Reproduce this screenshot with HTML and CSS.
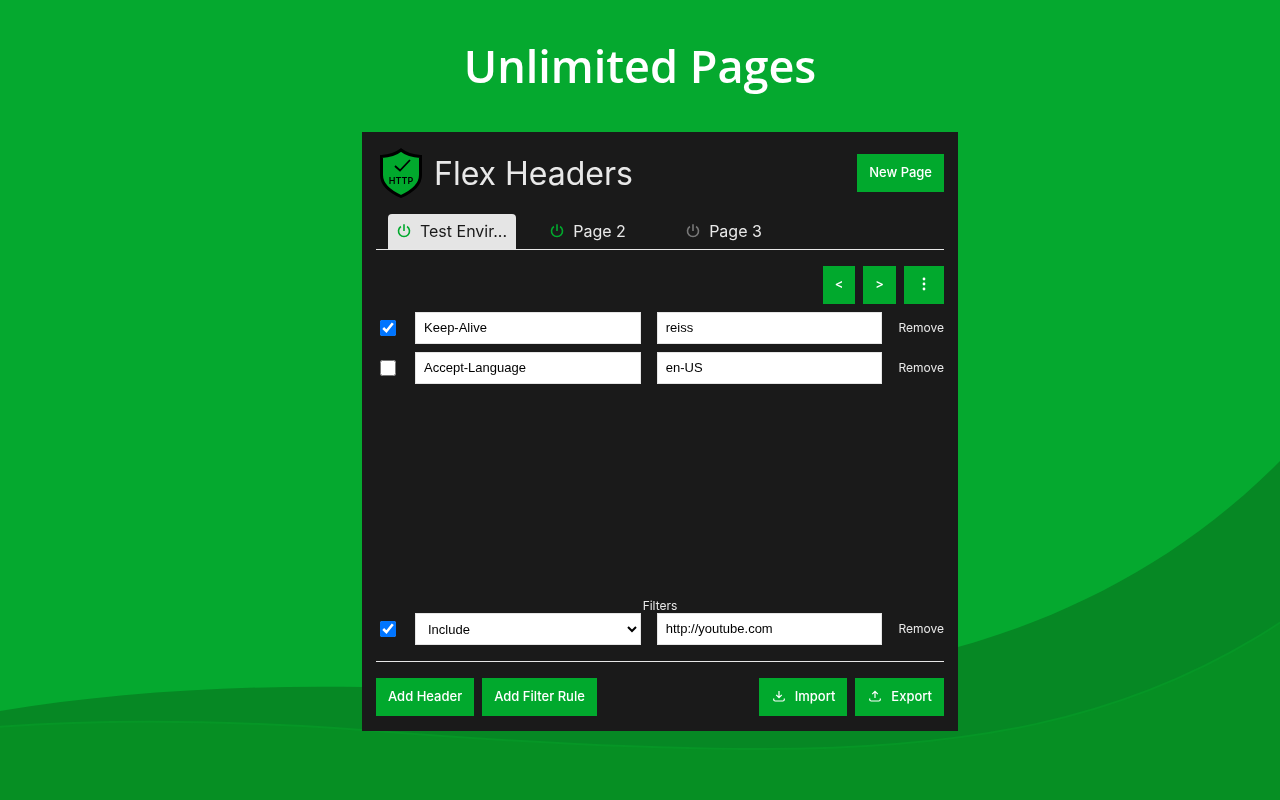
FILE: index.html
```html
<!DOCTYPE html>
<html lang="en">
<head>
<meta charset="utf-8">
<title>Flex Headers</title>
<link rel="stylesheet" href="styles.css">
</head>
<body>
<svg class="waves" viewBox="0 0 1280 800" preserveAspectRatio="none" aria-hidden="true">
  <path class="wave-back" d="M0 711C110 693 230 685 362 687C560 690 780 690 958 647C1080 613 1190 552 1280 461V800H0Z"/>
  <path class="wave-front" d="M-4 727C120 718 240 721 362 730C500 741 620 748 740 749C960 751 1130 723 1284 620V804H-4Z"/>
</svg>
<main class="showcase">
  <h1 class="headline">Unlimited Pages</h1>
  <section class="panel">
    <header class="panel-header">
      <svg class="logo" viewBox="0 0 42 50" aria-hidden="true">
        <path d="M21 2C16 6 9 8 1.500 8.500V27C1.500 37 11 44 21 48.500C31 44 40.500 37 40.500 27V8.500C33 8 26 6 21 2Z" fill="#01a92d" stroke="#000" stroke-width="3"/>
        <path d="M15 18l5 4.500L30 12" fill="none" stroke="#000" stroke-width="1.800"/>
        <text x="21" y="35.500" text-anchor="middle" class="logo-text">HTTP</text>
      </svg>
      <h2 class="app-name">Flex Headers</h2>
      <button class="btn" type="button">New Page</button>
    </header>
    <nav class="tabs">
      <button class="tab tab-active" type="button">
        <svg class="power" viewBox="0 0 14 14" aria-hidden="true"><path d="M3.900 2.500A5.500 5.500 0 1 0 10.100 2.500M7 .3V7"/></svg>
        <span class="tab-label">Test Envir...</span>
      </button>
      <button class="tab" type="button">
        <svg class="power" viewBox="0 0 14 14" aria-hidden="true"><path d="M3.900 2.500A5.500 5.500 0 1 0 10.100 2.500M7 .3V7"/></svg>
        <span class="tab-label">Page 2</span>
      </button>
      <button class="tab" type="button">
        <svg class="power power-off" viewBox="0 0 14 14" aria-hidden="true"><path d="M3.900 2.500A5.500 5.500 0 1 0 10.100 2.500M7 .3V7"/></svg>
        <span class="tab-label">Page 3</span>
      </button>
    </nav>
    <div class="actions">
      <button class="btn" type="button" aria-label="Move page left">&lt;</button>
      <button class="btn" type="button" aria-label="Move page right">&gt;</button>
      <button class="btn" type="button" aria-label="More options">
        <svg class="icon" viewBox="0 0 16 16" aria-hidden="true"><g fill="currentColor"><circle cx="8" cy="3" r="1.400"/><circle cx="8" cy="8" r="1.400"/><circle cx="8" cy="13" r="1.400"/></g></svg>
      </button>
    </div>
    <div class="rules">
      <div class="rule">
        <input class="check" type="checkbox" aria-label="Enable Keep-Alive" checked>
        <input class="field" type="text" aria-label="Header name" value="Keep-Alive">
        <input class="field" type="text" aria-label="Header value" value="reiss">
        <button class="remove" type="button">Remove</button>
      </div>
      <div class="rule">
        <input class="check" type="checkbox" aria-label="Enable Accept-Language">
        <input class="field" type="text" aria-label="Header name" value="Accept-Language">
        <input class="field" type="text" aria-label="Header value" value="en-US">
        <button class="remove" type="button">Remove</button>
      </div>
    </div>
    <div class="filters">
      <h3 class="filters-title">Filters</h3>
      <div class="rule">
        <input class="check" type="checkbox" aria-label="Enable filter" checked>
        <select class="field field-select" aria-label="Filter type"><option>Include</option><option>Exclude</option></select>
        <input class="field" type="text" aria-label="Filter URL" value="http://youtube.com">
        <button class="remove" type="button">Remove</button>
      </div>
    </div>
    <footer class="panel-footer">
      <button class="btn" type="button">Add Header</button>
      <button class="btn" type="button">Add Filter Rule</button>
      <button class="btn btn-push" type="button">
        <svg class="icon icon-line" viewBox="0 0 16 16" aria-hidden="true"><path d="M8 3v6.500M5.200 6.900L8 9.700l2.800-2.800M2.700 10.500v1q0 1.500 1.500 1.500h7.600q1.500 0 1.500-1.500v-1"/></svg>
        Import
      </button>
      <button class="btn" type="button">
        <svg class="icon icon-line" viewBox="0 0 16 16" aria-hidden="true"><path d="M8 10V3.300M5.200 6.100L8 3.300l2.800 2.800M2.700 10.500v1q0 1.500 1.500 1.500h7.600q1.500 0 1.500-1.500v-1"/></svg>
        Export
      </button>
    </footer>
  </section>
</main>
</body>
</html>
```
FILE: styles.css
```css
* {
  box-sizing: border-box;
}

body {
  margin: 0;
  min-height: 100vh;
  background: #05a92f;
  font-family: Inter, "Liberation Sans", sans-serif;
}

button {
  border: 0;
  background: none;
  font-family: inherit;
  cursor: pointer;
}

.waves {
  position: fixed;
  inset: 0;
  width: 100%;
  height: 100%;
  z-index: -1;
}

.wave-back {
  fill: #068824;
}

.wave-front {
  fill: #068f23;
  stroke: #069626;
  stroke-width: 2;
}

.showcase {
  display: flex;
  flex-direction: column;
  align-items: center;
  padding: 34px 0 40px;
}

.headline {
  margin: 0 0 34px;
  color: #fff;
  font: 600 45px/64px "Open Sans", "Noto Sans", sans-serif;
}

.panel {
  display: flex;
  flex-direction: column;
  width: 100%;
  max-width: 596px;
  margin-left: 40px;
  padding: 14px 14px 15px;
  background: #1a1a1a;
  color: #e8e8e8;
}

.panel-header {
  display: flex;
  align-items: center;
  gap: 12px;
  padding: 2px 0 2px 4px;
}

.logo {
  width: 42px;
  height: 50px;
}

.logo-text {
  font: 600 9px Inter, sans-serif;
}

.app-name {
  flex: 1;
  margin: 0;
  padding-top: 2px;
  font-size: 32px;
  line-height: 40px;
  font-weight: 400;
}

.btn {
  display: flex;
  align-items: center;
  gap: 8px;
  height: 38px;
  padding: 0 12px 2px;
  background: #01a92d;
  color: #fff;
  font-size: 13px;
  font-weight: 500;
}

.icon {
  width: 16px;
  height: 16px;
}

.icon-line {
  fill: none;
  stroke: currentColor;
  stroke-width: 1.2;
}

.tabs {
  display: flex;
  gap: 8px;
  margin-top: 14px;
  padding: 0 12px;
  border-bottom: 1px solid #e8e8e8;
}

.tab {
  display: flex;
  align-items: center;
  justify-content: center;
  gap: 9px;
  width: 128px;
  height: 35px;
  padding: 0 0 2px;
  border-radius: 4px 4px 0 0;
  color: #e8e8e8;
  font-size: 16px;
}

.tab-active {
  background: #e5e5e5;
  color: #1a1a1a;
}

.power {
  width: 14px;
  height: 14px;
  fill: none;
  stroke: #01a92d;
  stroke-width: 1.6;
}

.power-off {
  stroke: #777;
}

.actions {
  display: flex;
  justify-content: flex-end;
  gap: 8px;
  margin-top: 16px;
}

.rules {
  display: flex;
  flex-direction: column;
  gap: 8px;
  min-height: 286px;
  margin-top: 8px;
}

.rule {
  display: grid;
  grid-template-columns: 23px 1fr 1fr auto;
  align-items: center;
  column-gap: 16px;
}

.check {
  justify-self: center;
  width: 16px;
  height: 16px;
  margin: 0;
}

.field {
  width: 100%;
  min-width: 0;
  height: 32px;
  padding: 0 8px 2px;
  border: 1px solid #e5e5e5;
  border-radius: 0;
  background: #fff;
  color: #000;
  font: 13px "Liberation Sans", Arial, sans-serif;
}

.field-select {
  padding: 0 2px 0 8px;
}

.remove {
  padding: 0 0 2px;
  color: #e8e8e8;
  font-size: 12px;
}

.filters {
  padding-bottom: 16px;
  border-bottom: 1px solid #e8e8e8;
}

.filters-title {
  margin: 0;
  font-size: 12px;
  line-height: 15px;
  font-weight: 400;
  text-align: center;
}

.panel-footer {
  display: flex;
  gap: 8px;
  margin-top: 16px;
}

.btn-push {
  margin-left: auto;
}
```
